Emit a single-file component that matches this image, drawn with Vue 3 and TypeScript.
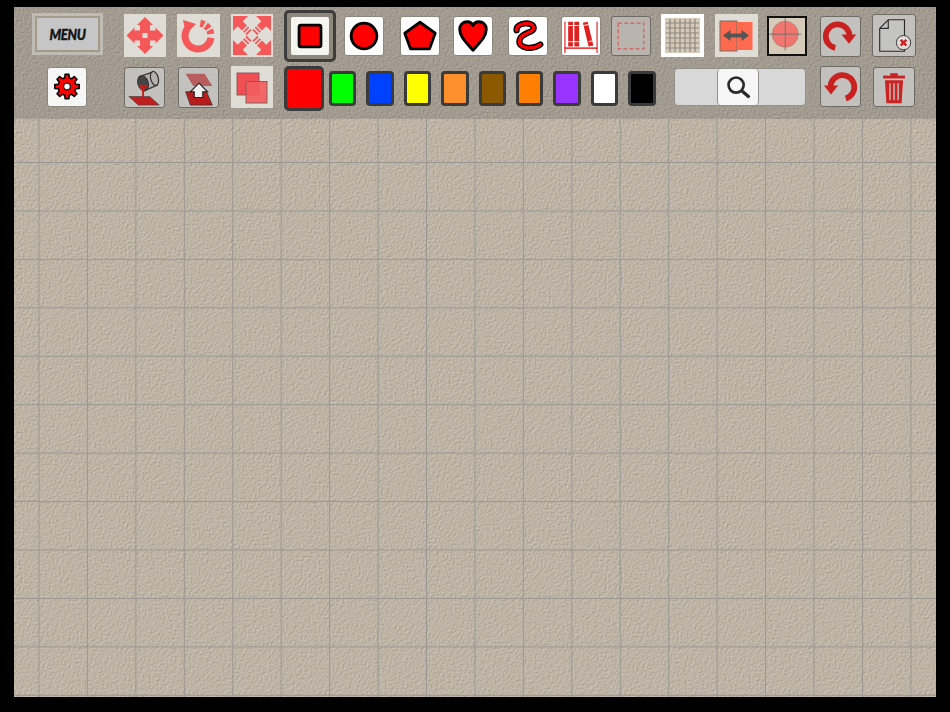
<script setup lang="ts">
const colors = [
  { name: 'green', value: '#00ff00' },
  { name: 'blue', value: '#0040ff' },
  { name: 'yellow', value: '#ffff00' },
  { name: 'light-orange', value: '#ff8f2b' },
  { name: 'brown', value: '#8b5a00' },
  { name: 'orange', value: '#ff8000' },
  { name: 'purple', value: '#9933ff' },
  { name: 'white', value: '#ffffff' },
  { name: 'black', value: '#000000' }
]

// 8 tooth gear outline around the middle of the 40px button
function gearPath(cx: number, cy: number, outer: number, inner: number): string {
  const teeth = 8
  const step = (Math.PI * 2) / teeth
  const points: string[] = []
  for (let i = 0; i < teeth; i++) {
    const a = i * step - Math.PI / 2
    const offsets: [number, number][] = [
      [-0.32, inner],
      [-0.2, outer],
      [0.2, outer],
      [0.32, inner]
    ]
    for (const [k, r] of offsets) {
      const x = cx + Math.cos(a + k * step) * r
      const y = cy + Math.sin(a + k * step) * r
      points.push(`${x.toFixed(2)} ${y.toFixed(2)}`)
    }
  }
  return `M${points.join('L')}Z`
}

const gear = gearPath(20, 19.5, 13, 9.5)
</script>

<template>
  <div class="frame">
    <div class="screen">
      <header class="toolbar">
        <div class="row row-top">
          <button class="menu"><span class="menu-inner"><span class="menu-text">MENU</span></span></button>

          <button class="tool flat move">
            <svg viewBox="0 0 42 42">
              <path d="M21 2.500L39.500 21 21 39.500 2.500 21z" fill="#f55858" />
              <g fill="#e0dcd6">
                <rect x="18.500" y="18.500" width="5" height="5" />
                <rect x="10.500" y="10.500" width="5.500" height="5.500" />
                <rect x="26" y="10.500" width="5.500" height="5.500" />
                <rect x="10.500" y="26" width="5.500" height="5.500" />
                <rect x="26" y="26" width="5.500" height="5.500" />
              </g>
            </svg>
          </button>
          <button class="tool flat rotate">
            <svg viewBox="0 0 43 43">
              <g fill="none" stroke="#f55858" stroke-width="7">
                <path d="M10.400 14.500A13 13 0 1 0 33.900 23.800" />
                <path d="M23.300 9.200A13 13 0 0 1 33.950 20.900" stroke-dasharray="4 2" />
              </g>
              <path d="M6 6l13 4-10 10z" fill="#f55858" />
            </svg>
          </button>
          <button class="tool flat scale">
            <svg viewBox="0 0 42 42">
              <g fill="#f55858">
                <path d="M2 1.500h15L2 16.500z" />
                <path d="M40 1.500H25l15 15z" />
                <path d="M2 40.500h15L2 25.500z" />
                <path d="M40 40.500H25l15-15z" />
              </g>
              <g stroke="#f55858" stroke-width="7" stroke-dasharray="12 1.500 1.800 1.500 1.800 9">
                <path d="M5 5l16 16" />
                <path d="M37 5L21 21" />
                <path d="M5 37l16-16" />
                <path d="M37 37L21 21" />
              </g>
            </svg>
          </button>

          <div class="selected shape-square">
            <button class="shape">
              <svg viewBox="0 0 40 40">
                <rect x="8.500" y="8.500" width="23" height="23" rx="2" fill="#ff0000" stroke="#000" stroke-width="3" />
              </svg>
            </button>
          </div>
          <button class="shape circle">
            <svg viewBox="0 0 40 40"><circle cx="20" cy="20" r="13.500" fill="#ff0000" stroke="#000" stroke-width="3" /></svg>
          </button>
          <button class="shape pentagon">
            <svg viewBox="0 0 40 40"><path d="M20 5.500l16 11.500-6 16.500H10L4 17z" fill="#ff0000" stroke="#000" stroke-width="3" stroke-linejoin="round" /></svg>
          </button>
          <button class="shape heart">
            <svg viewBox="0 0 40 40"><path d="M20 35C13 27 6 21 6 13c0-5 3.500-8 8-8 3 0 5 1.500 6 4 1-2.500 3-4 6-4 4.500 0 8 3 8 8 0 8-7 14-14 22z" fill="#ff0000" stroke="#000" stroke-width="3" stroke-linejoin="round" /></svg>
          </button>
          <button class="shape squiggle">
            <svg viewBox="0 0 40 40">
              <path d="M8 14C7 6 25 4 26 11 27 17 12 16 11 25 10 33 24 35 33 29" fill="none" stroke="#000" stroke-width="6.500" stroke-linecap="round" />
              <path d="M8 14C7 6 25 4 26 11 27 17 12 16 11 25 10 33 24 35 33 29" fill="none" stroke="#ff0000" stroke-width="3.500" stroke-linecap="round" />
            </svg>
          </button>
          <button class="shape books">
            <svg viewBox="0 0 40 40">
              <g fill="#e01f1f">
                <rect x="2.500" y="5" width="1.200" height="33" />
                <rect x="36.300" y="5" width="1.200" height="33" />
                <rect x="2.500" y="32" width="35" height="1.500" />
                <rect x="6.500" y="5" width="5" height="26" />
                <rect x="13" y="5" width="5" height="26" />
                <path d="M22 6l5-1 6 25-5 1z" />
              </g>
              <path d="M6.500 9h11.500M22.500 9l5-1M6.500 26h11.500M28 26l4-1" stroke="#fff" stroke-width="1" />
            </svg>
          </button>
          <button class="tool pressed dashed">
            <svg viewBox="0 0 40 40">
              <rect x="6.500" y="6.500" width="27" height="27" fill="none" stroke="#d85c58" stroke-width="1.300" stroke-dasharray="4 2.500" />
            </svg>
          </button>
          <button class="tool grid-tool">
            <svg viewBox="0 0 43 43">
              <rect width="43" height="43" fill="#fff" />
              <rect x="4" y="4" width="35" height="35" fill="#d6cab9" />
              <path d="M9 5v33M14 5v33M19 5v33M24 5v33M29 5v33M34 5v33M5 9h33M5 14h33M5 19h33M5 24h33M5 29h33M5 34h33" stroke="#8d8881" stroke-width="1.200" />
            </svg>
          </button>
          <button class="tool flat flip">
            <svg viewBox="0 0 43 43">
              <rect x="5" y="7" width="17" height="30" fill="#ff6a4f" stroke="#7e6a60" stroke-width="1" />
              <rect x="22" y="8" width="15.500" height="28" fill="#ff6a4f" />
              <path d="M8 21.500l7.500-5.500v3.500h11V16l7.500 5.500-7.500 5.500v-3.500h-11V27z" fill="#555" />
            </svg>
          </button>
          <button class="tool target">
            <svg viewBox="0 0 40 40">
              <circle cx="18" cy="18" r="14.500" fill="#f27570" stroke="#8e7d74" stroke-width=".6" />
              <path d="M18 0v36M0 18h36" stroke="#77706a" stroke-width="1" />
            </svg>
          </button>
          <button class="tool pressed redo">
            <svg viewBox="0 0 41 41">
              <path d="M15 32.500A12.500 12.500 0 1 1 30 20" fill="none" stroke="#c8211f" stroke-width="6" />
              <path d="M21.500 18.500h15.500l-7.500 9.500z" fill="#c8211f" />
            </svg>
          </button>
          <button class="tool pressed doc">
            <svg viewBox="0 0 44 43">
              <path d="M7 14L16 5h17v33H7zM16 5v9H7" fill="#c4c4c2" stroke="#2b2b2b" stroke-width="1.200" />
              <circle cx="32" cy="29" r="7.500" fill="#ddd" stroke="#333" stroke-width="1" />
              <path d="M29 26l6 6m0-6l-6 6" stroke="#cc2020" stroke-width="2.500" />
            </svg>
          </button>
        </div>

        <div class="row row-bottom">
          <button class="gear">
            <svg viewBox="0 0 40 40">
              <path :d="gear" fill="#ff0000" stroke="#000" stroke-width="1.600" stroke-linejoin="round" />
              <circle cx="20" cy="19.500" r="3.500" fill="#fff" stroke="#222" stroke-width="1.400" />
            </svg>
          </button>
          <button class="tool pressed bucket">
            <svg viewBox="0 0 41 41">
              <path d="M4 30h22l10 9H14z" fill="#c01f1f" stroke="#444" stroke-width=".7" />
              <path d="M15 9l15-5 4 14-14 6z" fill="#b5b3af" stroke="#333" stroke-width="1.300" />
              <ellipse cx="31" cy="11" rx="4" ry="7.500" transform="rotate(-15 31 11)" fill="#b5b3af" stroke="#333" stroke-width="1.300" />
              <ellipse cx="19" cy="16" rx="5.500" ry="8" transform="rotate(-18 19 16)" fill="#444" stroke="#333" stroke-width="1" />
              <path d="M15 17c3 1 7 1 9 0l-1 3c-2 2-3 3-3 5v6h-2v-6c0-2-3-4-3-8z" fill="#c01f1f" />
            </svg>
          </button>
          <button class="tool pressed swap">
            <svg viewBox="0 0 41 41">
              <path d="M7 6h20l8 13H15z" fill="#b34c4c" opacity=".85" />
              <path d="M7 25h22l6 14H12z" fill="#b81c1c" stroke="#333" stroke-width=".8" />
              <path d="M21 16l9 9h-5v6h-9v-6h-4z" fill="#eee" stroke="#222" stroke-width="1.200" />
            </svg>
          </button>
          <button class="tool flat layers">
            <svg viewBox="0 0 42 42">
              <rect x="6" y="7" width="22" height="22" fill="#f04f53" stroke="#8e5a58" stroke-width="1" />
              <rect x="15" y="15.500" width="21" height="21.500" fill="#f25d5d" fill-opacity=".92" stroke="#8e5a58" stroke-width="1" />
            </svg>
          </button>

          <div class="swatch current"></div>
          <div
            v-for="color in colors"
            :key="color.name"
            class="swatch"
            :style="{ backgroundColor: color.value }"
          ></div>

          <div class="zoom-control">
            <div class="zoom-side zoom-left"></div>
            <div class="zoom-handle">
              <svg viewBox="0 0 42 38">
                <circle cx="19" cy="17" r="8" fill="none" stroke="#2b2b2b" stroke-width="2.800" />
                <path d="M25.500 23.500l6.500 5.500" stroke="#2b2b2b" stroke-width="3.500" stroke-linecap="round" />
              </svg>
            </div>
            <div class="zoom-side"></div>
          </div>

          <button class="tool pressed undo">
            <svg viewBox="0 0 41 41">
              <path d="M26 33A12.500 12.500 0 1 0 10 21" fill="none" stroke="#c8211f" stroke-width="6" />
              <path d="M3 19.500h15L10.500 29z" fill="#c8211f" />
            </svg>
          </button>
          <button class="tool pressed trash">
            <svg viewBox="0 0 42 40">
              <g fill="#cc2222">
                <rect x="9.500" y="8" width="23" height="3" />
                <rect x="17" y="5.500" width="8" height="3" />
                <path d="M11.500 13h19l-1.500 24H13zM16 16v18h1.500V16zM20.300 16v18h1.500V16zM24.600 16v18h1.500V16z" fill-rule="evenodd" />
              </g>
            </svg>
          </button>
        </div>
      </header>

      <main class="canvas"></main>
    </div>
  </div>
</template>

<style scoped>
.frame {
  width: 950px;
  height: 712px;
  padding: 7px 14px 15px;
  box-sizing: border-box;
  background: #000;
}

.screen {
  display: flex;
  flex-direction: column;
  height: 100%;
}

.toolbar {
  flex: none;
  height: 112px;
  box-sizing: border-box;
  padding-top: 3px;
  background-color: #a39b8f;
  background-image: url("data:image/svg+xml,%3Csvg xmlns='http://www.w3.org/2000/svg' width='300' height='300'%3E%3Cfilter id='n' x='0' y='0' width='100%25' height='100%25' color-interpolation-filters='sRGB'%3E%3CfeTurbulence type='fractalNoise' baseFrequency='.5' numOctaves='3' stitchTiles='stitch'/%3E%3CfeDiffuseLighting surfaceScale='.45' lighting-color='%23c0b7aa'%3E%3CfeDistantLight azimuth='45' elevation='58'/%3E%3C/feDiffuseLighting%3E%3C/filter%3E%3Crect width='300' height='300' filter='url(%23n)'/%3E%3C/svg%3E");
}

.row {
  display: flex;
}

.row-top {
  height: 52px;
  align-items: flex-start;
}

.row-bottom {
  height: 52px;
  margin-top: 4px;
  align-items: flex-start;
}

button {
  display: block;
  flex: none;
  padding: 0;
  border: 0;
  background: none;
}

svg {
  display: block;
  width: 100%;
  height: 100%;
}

.menu {
  width: 71px;
  height: 42px;
  margin: 3px 0 0 18px;
  padding: 3px;
  background: #c0bbb3;
}

.menu-inner {
  display: flex;
  align-items: center;
  justify-content: center;
  height: 100%;
  box-sizing: border-box;
  border: 2px solid #a39a8c;
  background: #c6c6c6;
}

.menu-text {
  display: inline-block;
  color: #141414;
  font: italic 900 15px Lato, "Liberation Sans", sans-serif;
  letter-spacing: -0.4px;
  -webkit-text-stroke: 0.4px #141414;
  transform: scaleX(0.88);
}

.tool {
  box-sizing: border-box;
  width: 41px;
  height: 41px;
}

.flat {
  width: 42px;
  height: 43px;
  background: #e0dcd6;
}

.pressed {
  border: 1px solid #6e6a64;
  border-radius: 3px;
  background: #c3c1bd;
}

.shape {
  box-sizing: border-box;
  width: 40px;
  height: 40px;
  border: 1px solid #8d877d;
  border-radius: 3px;
  background: #fff;
}

.selected {
  flex: none;
  box-sizing: border-box;
  width: 52px;
  height: 52px;
  margin-left: 11px;
  padding: 3px;
  border: 3px solid #3d3d3d;
  border-radius: 5px;
  background: #8f887d;
}

.selected .shape {
  background: #f6f6f1;
}

.move { margin: 4px 0 0 21px; }
.rotate { width: 43px; margin: 4px 0 0 11px; }
.scale { margin: 4px 0 0 11px; }
.circle { margin: 6px 0 0 8px; }
.pentagon { margin: 6px 0 0 16px; }
.heart { margin: 6px 0 0 13px; }
.squiggle { margin: 6px 0 0 15px; }
.books { margin: 6px 0 0 13px; }
.dashed { width: 40px; height: 40px; margin: 6px 0 0 10px; background: #b9b5ae; }
.grid-tool { width: 43px; height: 43px; margin: 4px 0 0 10px; }
.flip { width: 43px; margin: 4px 0 0 11px; }
.target { width: 40px; height: 40px; margin: 6px 0 0 9px; border: 2px solid #111; background: #d6cab9; }
.redo { margin: 6px 0 0 13px; }
.doc { width: 44px; height: 43px; margin: 4px 0 0 11px; }

.gear {
  box-sizing: border-box;
  width: 40px;
  height: 40px;
  margin: 1px 0 0 33px;
  border: 1px solid #8d877d;
  border-radius: 3px;
  background: #f6f6f6;
}

.bucket { margin: 1px 0 0 37px; }
.swap { margin: 1px 0 0 13px; }
.layers { margin: 0 0 0 12px; height: 42px; }

.swatch {
  flex: none;
  box-sizing: border-box;
  width: 27.4px;
  height: 35px;
  margin: 5px 0 0 10px;
  border: 3px solid #3a3a3a;
  border-radius: 4px;
}

.current {
  width: 40px;
  height: 45px;
  margin: 0 5px 0 11px;
  border-radius: 5px;
  background: #ff0000;
}

.swatch.current + .swatch {
  margin-left: 0;
}

.zoom-control {
  flex: none;
  display: flex;
  box-sizing: border-box;
  width: 132px;
  height: 38px;
  margin: 2px 0 0 18.400px;
  overflow: hidden;
  border: 1px solid #94908a;
  border-radius: 4px;
  background: #d8d8d8;
}

.zoom-side {
  flex: 1;
}

.zoom-left {
  flex: none;
  width: 42px;
}

.zoom-handle {
  flex: none;
  box-sizing: border-box;
  width: 42px;
  border: solid #94908a;
  border-width: 0 1px;
  border-radius: 4px;
  background: #f6f6f6;
}

.undo { margin: 0 0 0 14px; }
.trash { width: 42px; height: 40px; margin: 1px 0 0 12px; }

.canvas {
  flex: 1;
  background-color: #bfb4a5;
  background-image:
    linear-gradient(to right, #9b9893 0 1.200px, transparent 1.200px),
    linear-gradient(to bottom, #9b9893 0 1.200px, transparent 1.200px),
    url("data:image/svg+xml,%3Csvg xmlns='http://www.w3.org/2000/svg' width='300' height='300'%3E%3Cfilter id='n' x='0' y='0' width='100%25' height='100%25' color-interpolation-filters='sRGB'%3E%3CfeTurbulence type='fractalNoise' baseFrequency='.5' numOctaves='3' stitchTiles='stitch'/%3E%3CfeDiffuseLighting surfaceScale='.45' lighting-color='%23dfd4c4'%3E%3CfeDistantLight azimuth='45' elevation='58'/%3E%3C/feDiffuseLighting%3E%3C/filter%3E%3Crect width='300' height='300' filter='url(%23n)'/%3E%3C/svg%3E");
  background-size: 48.450px 100%, 100% 48.450px, 300px 300px;
  background-position: 24.500px 0, 0 43px, 0 0;
  background-repeat: repeat-x, repeat-y, repeat;
}
</style>

<style>
html,
body {
  margin: 0;
  background: #000;
}
</style>
